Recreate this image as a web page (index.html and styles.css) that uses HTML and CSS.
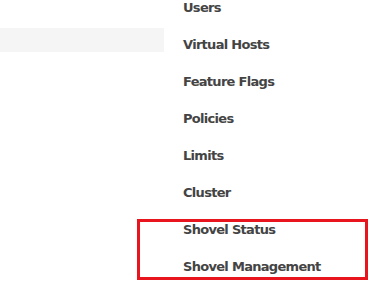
FILE: index.html
```html
<!DOCTYPE html>
<html lang="en">
  <head>
    <meta charset="UTF-8" />
    <meta name="viewport" content="width=device-width, initial-scale=1.0" />
    <title>Admin menu</title>
    <link rel="stylesheet" href="styles.css">
  </head>
  <body>
    <div class="page">
      <div class="sidebar">
        <div class="sidebar-bar"></div>
      </div>
      <ul class="menu">
        <li>Users</li>
        <li>Virtual Hosts</li>
        <li>Feature Flags</li>
        <li>Policies</li>
        <li>Limits</li>
        <li>Cluster</li>
        <li>Shovel Status</li>
        <li>Shovel Management</li>
      </ul>
      <div class="highlight"></div>
    </div>
  </body>
</html>
```

FILE: styles.css
```css
body {
  margin: 0;
  background-color: #fff;
  font-family: Tahoma, "DejaVu Sans", Verdana, sans-serif;
  overflow: hidden;
}
.page {
  position: relative;
  display: flex;
  height: 283px;
}
.sidebar {
  width: 164px;
  flex-shrink: 0;
  padding-top: 28px;
}
.sidebar-bar {
  height: 24px;
  background-color: #f5f5f5;
}
.menu {
  list-style: none;
  margin: -11px 0 0 0;
  padding: 0 0 0 19px;
}
.menu li {
  height: 37px;
  line-height: 37px;
  font-size: 13px;
  font-weight: bold;
  letter-spacing: -0.7px;
  color: #444;
  white-space: nowrap;
}
.highlight {
  position: absolute;
  left: 137px;
  top: 219px;
  width: 225px;
  height: 55px;
  border: 3px solid #e8141e;
}
```
